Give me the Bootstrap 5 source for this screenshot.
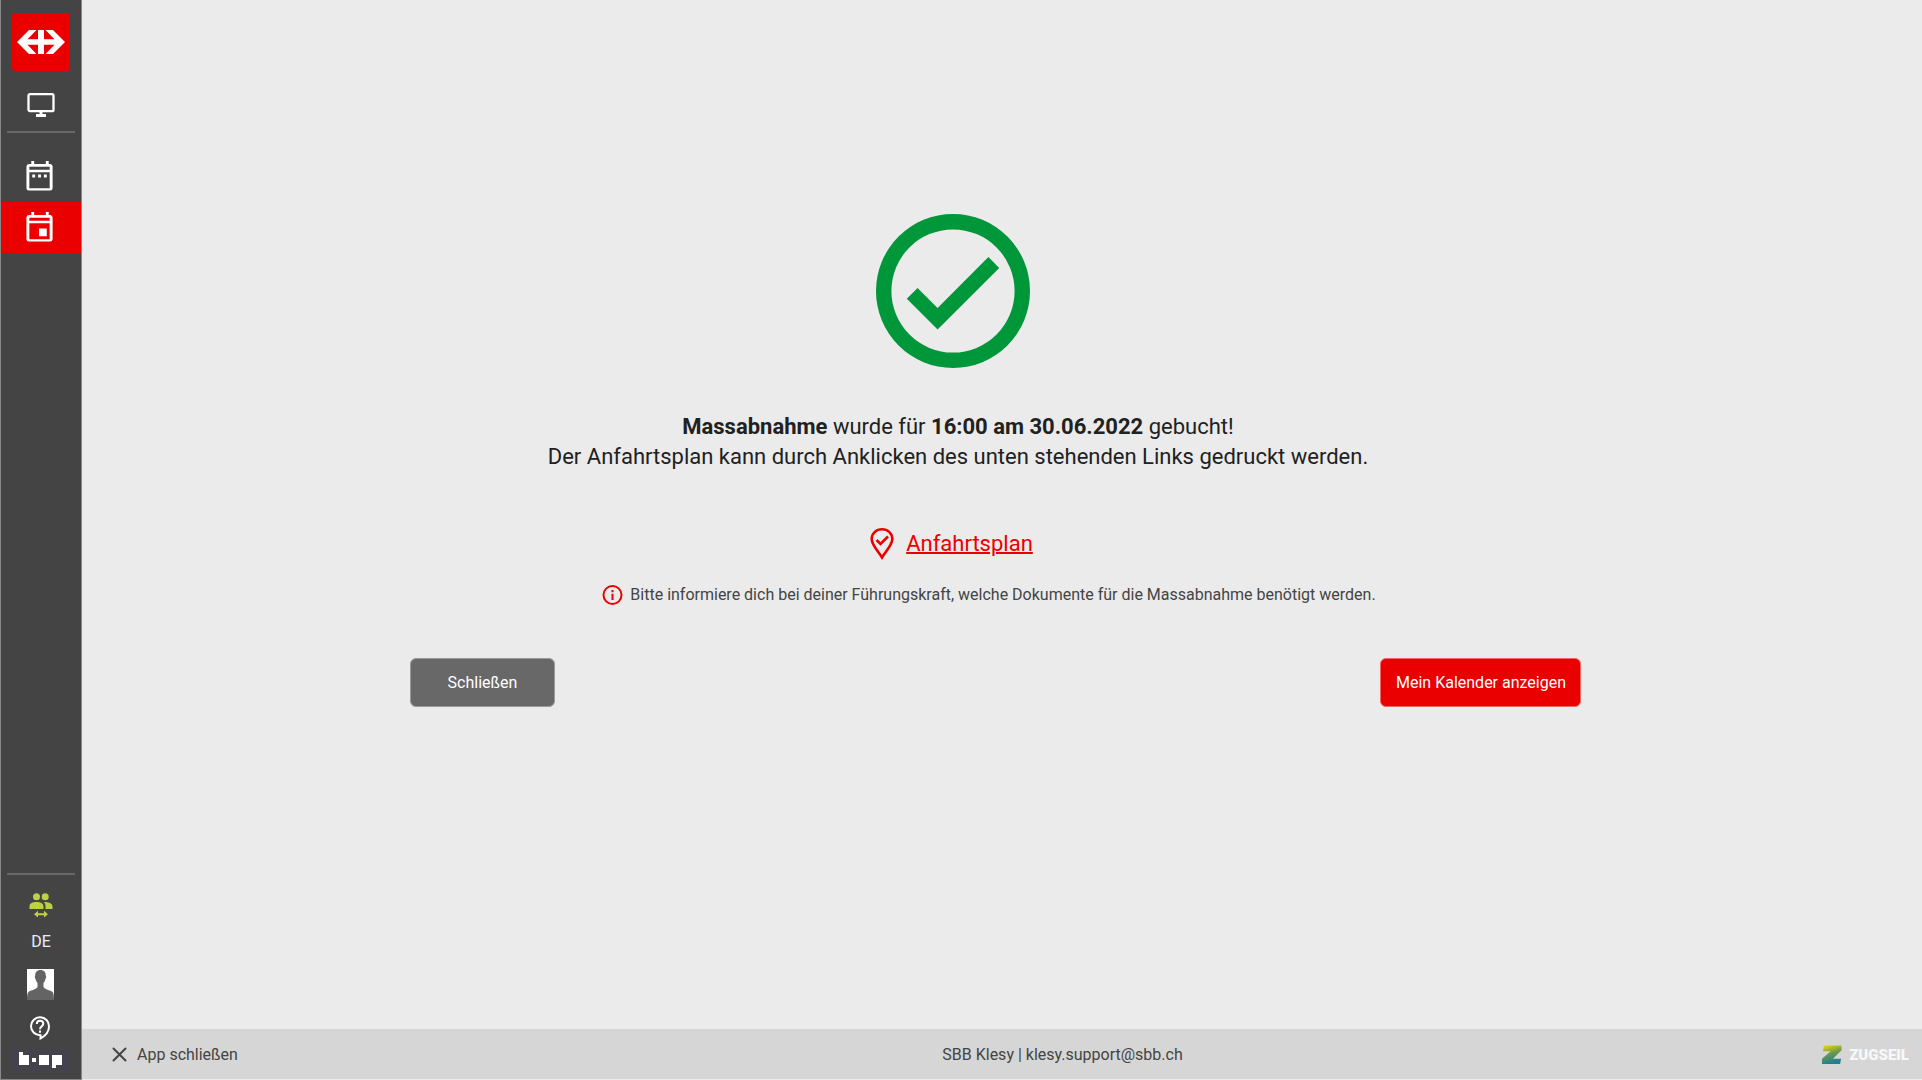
<!DOCTYPE html>
<html lang="de">
<head>
<meta charset="utf-8">
<meta name="viewport" content="width=device-width, initial-scale=1">
<title>SBB Klesy</title>
<link href="https://cdn.jsdelivr.net/npm/bootstrap@5.3.0/dist/css/bootstrap.min.css" rel="stylesheet">
<style>
  body { font-family: Roboto, "Liberation Sans", sans-serif; font-size: 16px; line-height: 24px; color: #444; background: #ebebeb; }
  svg { display: block; flex: none; }
  .side { width: 82px; background: #444; border: 1px solid #888; border-top: 0; color: #fff; }
  .side a, .side button { color: inherit; }
  .side-logo { margin-top: 13px; }
  .side-screen { margin: 22px 0 14px; }
  .side-item { height: 51px; padding-right: 2px; }
  .side-dates { margin-top: 18px; }
  .side-item.active { background: #eb0000; }
  .side-rule { width: 68px; height: 2px; margin: 0; border: 0; background: #686868; opacity: 1; }
  .side-users { margin-top: 18px; }
  .side-lang { font: 16px/20px Roboto, sans-serif; color: #e8effa !important; margin: 13px 0 17px; }
  .side-brand { margin: 9px 0 8px; }
  .brand-box { background: #43424d; }
  .content-pad { padding-right: 13px; }
  .done { width: 1171px; max-width: 100%; margin-top: 214px; }
  .done-area { padding-right: 86px; }
  .done-text { font-size: 22px; line-height: 30px; color: #212121; margin-top: 44px; padding-right: 75px; }
  .done-link { font-size: 22px; line-height: 32px; margin-top: 56px; padding-right: 88px; }
  .done-link a { color: #eb0000; gap: 12px; text-decoration: none; }
  .done-link span { text-decoration: underline; text-decoration-thickness: 2px; }
  .done-info { gap: 7px; margin-top: 23px; padding-right: 13px; }
  .done-actions { margin-top: 51px; }
  .act { height: 49px; border: 1px solid #aaa; border-radius: 6px; font-size: 16px; color: #fff !important; padding: 0 15px; }
  .act-close { width: 145px; background: #686868 !important; border-color: #999 !important; }
  .act-show { width: 201px; background: #eb0000 !important; border-color: #ee6666 !important; }
  .foot { height: 50px; background: #d6d6d6; padding: 1px 13px 0 30px; margin-bottom: 1px; }
  .foot button { gap: 10px; color: #444; }
  .foot-contact { padding-left: 104px; }
  .foot-brand { gap: 7px; }
  .zug { font: 900 15px/20px Roboto, sans-serif; color: #f8f8f8; }
</style>
</head>
<body>
<div class="d-flex min-vh-100">
  <nav class="side d-flex flex-column align-items-center flex-shrink-0" aria-label="Hauptnavigation">
    <a class="side-logo" href="#" aria-label="SBB">
      <svg width="58" height="58" viewBox="0 0 58 58"><rect width="58" height="58" rx="3" fill="#eb0000"/><path fill="#fff" d="M5 29 17 17h7.500l-9 9.200H26V17h6v9.200h10.500l-9-9.200H41l12 12-12 12h-7.500l9-9.200H32V41h-6v-9.200H15.500l9 9.200H17z"/></svg>
    </a>
    <a class="side-screen" href="#" aria-label="Desktop">
      <svg width="28" height="24" viewBox="0 0 28 24" fill="none" stroke="#fff" stroke-width="2.300"><rect x="1.500" y="1.200" width="25" height="17" rx="1.500"/><path d="M14 18v4M9 22.500h10" stroke-width="3"/></svg>
    </a>
    <hr class="side-rule">
    <a class="side-item side-dates w-100 d-flex align-items-center justify-content-center" href="#" aria-label="Kalender">
      <svg width="28" height="31" viewBox="0 0 28 32"><path fill="#fff" d="M5 0h3v3h12V0h3v3h2a3 3 0 0 1 2 2.500V28a2.500 2.500 0 0 1-2.500 2.500h-22A2.500 2.500 0 0 1 0 28V5.500A3 3 0 0 1 3 3h2zM3 6v3h21V6zm0 5.500V28h21V11.500zM6 14h3v3H6zm6 0h3v3h-3zm6 0h3v3h-3z" fill-rule="evenodd"/></svg>
    </a>
    <a class="side-item active w-100 d-flex align-items-center justify-content-center" href="#" aria-label="Termin" aria-current="page">
      <svg width="28" height="31" viewBox="0 0 28 32"><path fill="#fff" d="M5 0h3v3h12V0h3v3h2a3 3 0 0 1 2 2.500V28a2.500 2.500 0 0 1-2.500 2.500h-22A2.500 2.500 0 0 1 0 28V5.500A3 3 0 0 1 3 3h2zM3 6v3h21V6zm0 5.500V28h21V11.500zM13 17h8v8h-8z" fill-rule="evenodd"/></svg>
    </a>
    <div class="mt-auto d-flex flex-column align-items-center">
      <hr class="side-rule">
      <a class="side-users" href="#" aria-label="Benutzer wechseln">
        <svg width="24" height="26" viewBox="0 0 24 26" fill="#bed241"><circle cx="7.500" cy="3.700" r="3.500"/><circle cx="16.200" cy="3.700" r="3.500"/><path d="M.5 16v-2.500C.5 10 4 9 7.500 9s7 1 7 4.500V16zM15 9c4 0 8.500 1 8.500 4.500V16h-7v-2.500c0-2-.5-3.300-1.900-4.400zM5 21.200l4-3.400v2.400h6v-2.400l4 3.400-4 3.400v-2.400H9v2.400z"/></svg>
      </a>
      <button class="side-lang btn p-0 border-0" type="button">DE</button>
      <a href="#" aria-label="Profil">
        <svg width="28" height="31" viewBox="0 0 28 31"><path fill="#fff" d="M0 0h27v31H0z"/><path fill="#646464" d="M13.500 1C17 1 19 3.200 18.800 7c.7.300.4 2.500-.4 3-.3 2-1.200 3-1.900 4v4c2 3 6 3 8.500 4.500 1.500 1 2 3.500 2 8.500H0c0-5 .5-7.500 2-8.500C4.500 21 8.500 21 10.500 18v-4c-.7-1-1.600-2-1.900-4-.8-.5-1.100-2.700-.4-3C8 3.200 10 1 13.500 1z"/></svg>
      </a>
      <a class="mt-3" href="#" aria-label="Hilfe">
        <svg width="22" height="24" viewBox="0 0 22 24" fill="none" stroke="#fff" stroke-width="2"><path d="M10.500 22.500v-3.300H10A9 9 0 1 1 19 10.500c0 5-4 9.500-8.500 12z"/><path d="M6.800 8c0-4.500 6.500-4.200 6.500-.3C13.300 10.300 10 10.200 10 13.300M10 14.500v2.200"/></svg>
      </a>
      <a class="side-brand" href="#" aria-label="bop">
        <svg class="brand-box" width="58" height="22" viewBox="0 0 58 22"><path fill="#fff" d="M7 3h4v3h6v10H7zM20 9h4v4h-4zM27 6h10v10H27zM40 6h10v10h-6v3h-4z"/></svg>
      </a>
    </div>
  </nav>

  <div class="d-flex flex-column flex-grow-1">
    <main class="content-pad flex-grow-1 d-flex justify-content-center">
      <div class="done">
        <div class="done-area">
          <svg class="mx-auto" width="154" height="154" viewBox="2 2 20 20" fill="#00973b" role="img" aria-label="Erfolgreich"><path d="M12 2a10 10 0 1 0 0 20 10 10 0 0 0 0-20zm0 18a8 8 0 1 1 0-16 8 8 0 0 1 0 16zM16.600 7.600 10 14.200l-2.600-2.600L6 13l4 4 8-8z"/></svg>
        </div>
        <p class="done-text text-center mb-0"><b>Massabnahme</b> wurde für <b>16:00 am 30.06.2022</b> gebucht!<br>Der Anfahrtsplan kann durch Anklicken des unten stehenden Links gedruckt werden.</p>
        <div class="done-link d-flex justify-content-center">
          <a class="d-flex align-items-center" href="#">
            <svg width="24" height="32" viewBox="0 1 24 32" fill="none" stroke="#eb0000" stroke-width="2.600"><path d="M12 2.300C6 2.300 1.700 6.500 1.700 12 1.700 18 8 24 12 30.500c4-6.500 10.300-12.500 10.300-18.500C22.300 6.500 18 2.300 12 2.300z"/><path d="m6.500 13 4 4 7.500-7.500"/></svg>
            <span>Anfahrtsplan</span></a>
        </div>
        <div class="done-info d-flex justify-content-center align-items-center">
          <svg width="21" height="21" viewBox="0 0 21 21" fill="none" stroke="#eb0000" stroke-width="2"><circle cx="10.500" cy="10" r="9"/><path d="M10.500 5v2.200M10.500 8.800v6.200"/></svg>
          <span>Bitte informiere dich bei deiner Führungskraft, welche Dokumente für die Massabnahme benötigt werden.</span>
        </div>
        <div class="done-actions d-flex justify-content-between">
          <button type="button" class="btn act act-close">Schließen</button>
          <button type="button" class="btn act act-show text-nowrap">Mein Kalender anzeigen</button>
        </div>
      </div>
    </main>
    <footer class="foot row g-0 align-items-center">
      <div class="col">
        <button type="button" class="btn p-0 border-0 d-flex align-items-center">
          <svg width="15" height="15" viewBox="0 0 15 15" stroke="#444" stroke-width="2" stroke-linecap="round"><path d="m1.500 1.500 12 12m0-12-12 12"/></svg>App schließen</button>
      </div>
      <div class="foot-contact col-auto">SBB Klesy | klesy.support@sbb.ch</div>
      <div class="foot-brand col d-flex justify-content-end align-items-center">
        <svg width="20" height="20" viewBox="0 0 21 20"><defs><linearGradient id="zg" x1="0" y1="0" x2=".3" y2="1"><stop offset="0" stop-color="#f0e000"/><stop offset=".5" stop-color="#6f9a4a"/><stop offset="1" stop-color="#1f7f92"/></linearGradient></defs><path fill="url(#zg)" d="M2 0h18.500v5l-9 9H20l-1 5.500H0V14l9-8H1z"/></svg>
        <span class="zug">ZUGSEIL</span>
      </div>
    </footer>
  </div>
</div>
<script src="https://cdn.jsdelivr.net/npm/bootstrap@5.3.0/dist/js/bootstrap.bundle.min.js"></script>
</body>
</html>
